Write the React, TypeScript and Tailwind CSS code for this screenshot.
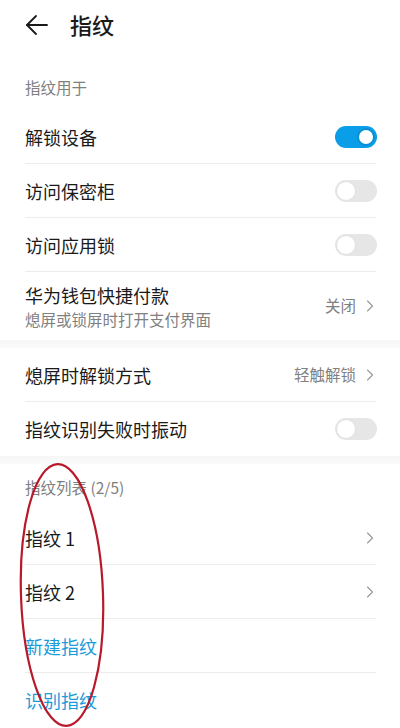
import { ChevronRight } from 'lucide-react'

const font = { fontFamily: '"Noto Sans CJK SC", "Noto Sans", sans-serif' }

function Toggle({ on }: { on?: boolean }) {
  return on ? (
    <div className="w-[42px] h-[22px] mr-[-2px] rounded-full bg-[#0a9ee9] flex items-center justify-end pr-[2px]">
      <div className="w-[18px] h-[18px] rounded-full bg-white border-[2px] border-[#0a8ed4]" />
    </div>
  ) : (
    <div className="w-[42px] h-[22px] mr-[-2px] rounded-full bg-[#e6e6e6] flex items-center pl-[1px]">
      <div className="w-[20px] h-[20px] rounded-full bg-white border border-[#e0e0e0]" />
    </div>
  )
}

function Row({
  title,
  right,
  last,
  blue,
}: {
  title: string
  right?: React.ReactNode
  last?: boolean
  blue?: boolean
}) {
  return (
    <div className="h-[54px] flex items-center justify-between mx-[25px] relative">
      <span className={`text-[18px] ${blue ? 'text-[#1d9bd9]' : 'text-[#1a1a1a]'}`}>{title}</span>
      {right}
      {!last && <div className="absolute left-0 right-[-1px] bottom-0 h-px bg-[#ececec]" />}
    </div>
  )
}

function Value({ text }: { text?: string }) {
  return (
    <div className="flex items-center gap-[4px] text-[#808080] text-[15.5px]">
      {text && <span>{text}</span>}
      <ChevronRight size={20} strokeWidth={1.4} className="text-[#9a9a9a] mr-[-5px]" />
    </div>
  )
}

export default function App() {
  return (
    <div className="w-[400px] h-[728px] bg-white overflow-hidden relative" style={font}>
      <div className="h-[52px] flex items-center pl-[24px] pb-[3px]">
        <svg width="26" height="22" viewBox="0 0 26 22" fill="none" stroke="#1a1a1a" strokeWidth="1.8" strokeLinecap="round">
          <path d="M3 11 H23" />
          <path d="M12 2 L3 11 L12 20" strokeLinejoin="round" />
        </svg>
        <span className="ml-[20px] text-[22px] font-medium text-[#1a1a1a]">指纹</span>
      </div>

      <div className="h-[58px] pt-[24px] px-[25px] text-[15.5px] text-[#808080]">指纹用于</div>
      <Row title="解锁设备" right={<Toggle on />} />
      <Row title="访问保密柜" right={<Toggle />} />
      <Row title="访问应用锁" right={<Toggle />} />
      <div className="h-[68px] mx-[25px] flex items-center justify-between">
        <div className="flex flex-col">
          <span className="text-[18px] text-[#1a1a1a] leading-[26px]">华为钱包快捷付款</span>
          <span className="text-[15.5px] text-[#808080] leading-[22px]">熄屏或锁屏时打开支付界面</span>
        </div>
        <Value text="关闭" />
      </div>
      <div className="h-[8px] bg-gradient-to-b from-[#f6f6f6] to-[#fafafa]" />

      <Row title="熄屏时解锁方式" right={<Value text="轻触解锁" />} />
      <Row title="指纹识别失败时振动" right={<Toggle />} last />
      <div className="h-[8px] bg-gradient-to-b from-[#f6f6f6] to-[#fafafa]" />

      <div className="h-[47px] pt-[12px] px-[25px] text-[15.5px] text-[#808080]">指纹列表 (2/5)</div>
      <Row title="指纹 1" right={<Value />} />
      <Row title="指纹 2" right={<Value />} />
      <Row title="新建指纹" blue />
      <Row title="识别指纹" blue last />

      <svg className="absolute left-0 top-0 pointer-events-none" width="400" height="728">
        <ellipse
          cx="62"
          cy="595"
          rx="41"
          ry="131"
          fill="none"
          stroke="#b8192b"
          strokeWidth="2.2"
          transform="rotate(-2 62 595)"
        />
      </svg>
    </div>
  )
}
